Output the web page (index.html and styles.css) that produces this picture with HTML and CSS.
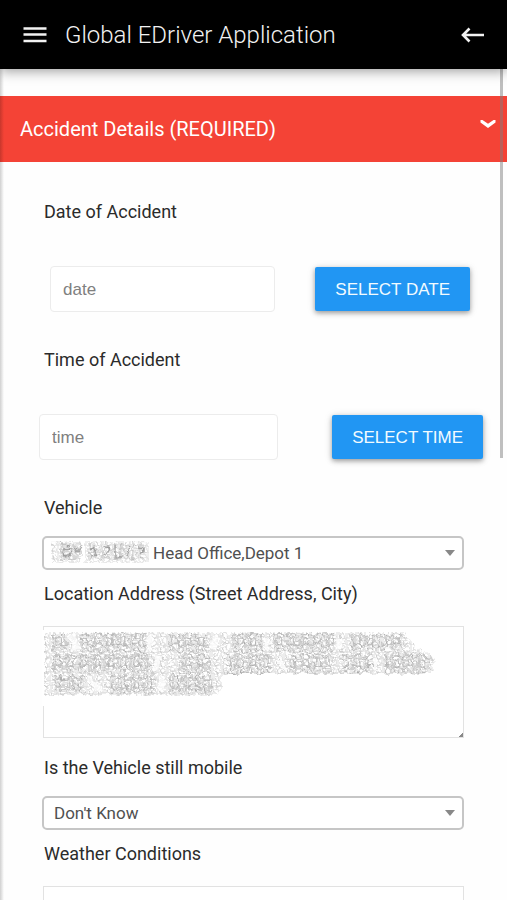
FILE: index.html
```html
<!DOCTYPE html>
<html lang="en">
<head>
<meta charset="utf-8">
<meta name="viewport" content="width=device-width, initial-scale=1">
<title>Global EDriver Application</title>
<link rel="stylesheet" href="styles.css">
</head>
<body>
<div class="app">
  <header class="topbar">
    <button class="icon-button" type="button" aria-label="Menu">
      <svg width="24" height="18" viewBox="0 0 24 18" fill="none" stroke="currentColor" stroke-width="2.6"><path d="M.5 2.500h23M.5 8.500h23M.5 15h23"/></svg>
    </button>
    <h1 class="title">Global EDriver Application</h1>
    <button class="icon-button" type="button" aria-label="Back">
      <svg width="24" height="18" viewBox="0 0 24 18" fill="none" stroke="currentColor" stroke-width="2.6"><path d="M3 9h21M9.500 2.500 3 9l6.500 6.500"/></svg>
    </button>
  </header>

  <main class="content">
    <button class="section-bar" type="button" aria-expanded="true">
      <span>Accident Details (REQUIRED)</span>
      <svg class="chevron" width="16" height="10" viewBox="0 0 16 10" fill="currentColor"><path d="M.5 1h2L8 4.700 13.500 1h2v2.400L8 9 .5 3.400z"/></svg>
    </button>

    <form class="form">
      <label class="label" for="date">Date of Accident</label>
      <div class="picker picker-date">
        <input class="input" id="date" type="text" placeholder="date">
        <button class="action" type="button">SELECT DATE</button>
      </div>

      <label class="label" for="time">Time of Accident</label>
      <div class="picker picker-time">
        <input class="input" id="time" type="text" placeholder="time">
        <button class="action" type="button">SELECT TIME</button>
      </div>

      <label class="label" for="vehicle">Vehicle</label>
      <div class="field">
        <select class="select select-vehicle" id="vehicle"><option>Head Office,Depot 1</option></select>
        <svg class="redaction redaction-vehicle" width="100" height="24" viewBox="0 0 100 24" aria-hidden="true">
          <defs>
            <pattern id="loops" width="13" height="11" patternUnits="userSpaceOnUse">
              <g fill="none" stroke="#777" stroke-width=".6">
                <ellipse cx="3" cy="4" rx="3" ry="3.500"/><ellipse cx="9" cy="6" rx="3.500" ry="3"/>
                <path d="M1 0v11M5 0l2 11M11 0v11M0 9q4-4 7 0t6 0"/>
              </g>
            </pattern>
            <pattern id="hatch" width="9" height="7" patternUnits="userSpaceOnUse">
              <g fill="none" stroke="#888" stroke-width=".6">
                <circle cx="4" cy="3" r="2.500"/><path d="M0 0l4 7M8 0v7M0 5h9"/>
              </g>
            </pattern>
            <filter id="rough" x="0" y="0" width="100%" height="100%">
              <feTurbulence type="fractalNoise" baseFrequency=".14" numOctaves="2" seed="4" result="noise"/>
              <feDisplacementMap in="SourceGraphic" in2="noise" scale="7" xChannelSelector="R" yChannelSelector="G"/>
            </filter>
          </defs>
          <g filter="url(#rough)">
            <path fill="url(#hatch)" opacity=".45" d="M1 1h30v22H1zM35 1h64v22H35z"/>
            <path fill="url(#loops)" opacity=".35" d="M10 3h18v17H10zM38 5h56v14H38z"/>
            <path fill="none" stroke="#888" stroke-width="1.300" opacity=".7" d="M20 6q-8 1-7 7t8 0-7-3M25 6l3 6 4-6M40 8q7-2 5 3 3 5-5 5M55 7q7 0 3 5t-5 4M66 6v11h7M80 7l-3 9M88 7q7 0 2 7"/>
          </g>
        </svg>
      </div>

      <label class="label label-box" for="address">Location Address (Street Address, City)</label>
      <div class="field">
        <textarea class="textarea" id="address"></textarea>
        <svg class="redaction redaction-address" width="400" height="80" viewBox="0 0 400 80" aria-hidden="true">
          <path class="cover" d="M0 4h60v76H0z"/>
          <g filter="url(#rough)">
            <g fill="url(#hatch)">
              <path opacity=".5" d="M2 6h361q6 11 16 18 12 3 15 12-3 11-15 12H180v14q-3 7-12 8H2z"/>
            </g>
            <g fill="url(#loops)">
              <path opacity=".5" d="M10 8h15v16H10zM38 7h66v19H38zM126 8h40v18h-40zM190 7h31v19h-31zM232 7h60v19h-60zM308 8h52v16h-52zM10 28h98v18H10zM137 28h32v20h-32zM184 28h45v20h-45zM248 28h40v19h-40zM300 28h30v19h-30zM342 27h46v20h-46zM12 49h31v18H12zM68 48h46v20H68zM127 49h43v18h-43z"/>
            </g>
            <path fill="none" stroke="#fff" stroke-width="5" opacity=".75" d="M29 9l6 14M108 10v14M175 9l-5 15M225 12v12M298 12v10M117 30l-5 15M236 32l8 12M333 33v10M47 52l13 15M120 50v15"/>
          </g>
        </svg>
      </div>

      <label class="label label-mobile" for="mobile">Is the Vehicle still mobile</label>
      <div class="field">
        <select class="select" id="mobile"><option>Don't Know</option><option>Yes</option><option>No</option></select>
      </div>

      <label class="label label-box" for="weather">Weather Conditions</label>
      <div class="field">
        <textarea class="textarea" id="weather"></textarea>
      </div>
    </form>
    <div class="scroll-thumb"></div>
  </main>
</div>
</body>
</html>
```
FILE: styles.css
```css
* {
  box-sizing: border-box;
}

body {
  margin: 0;
  background: #fefefe;
  color: #2b2b2b;
  font-family: Roboto, "Liberation Sans", sans-serif;
}

button,
input,
select,
textarea {
  margin: 0;
  font: inherit;
}

.app {
  display: flex;
  flex-direction: column;
  height: 100vh;
  overflow: hidden;
}

.topbar {
  position: relative;
  z-index: 1;
  display: flex;
  flex: none;
  align-items: center;
  gap: 18px;
  padding: 19px 23px 18px;
  background: #000;
  color: #f2f2f2;
  box-shadow: 0 2px 12px rgba(0, 0, 0, 0.4);
}

.title {
  flex: 1;
  margin: 0;
  font-size: 24px;
  font-weight: 300;
  line-height: 32px;
}

.icon-button {
  display: flex;
  padding: 0;
  border: 0;
  background: none;
  color: inherit;
}

.content {
  position: relative;
  flex: 1;
  min-height: 0;
  padding-top: 27px;
  overflow: hidden;
}

.content::before {
  position: absolute;
  inset: 0 auto 0 0;
  width: 4px;
  background: linear-gradient(to right, rgba(0, 0, 0, 0.18), transparent);
  content: "";
}

.section-bar {
  display: flex;
  align-items: center;
  justify-content: space-between;
  width: 100%;
  padding: 21px 11px 21px 20px;
  border: 0;
  background: #f44336;
  color: #fff;
  font-size: 20px;
  line-height: 24px;
  text-align: left;
}

.chevron {
  margin-bottom: 10px;
}

.form {
  display: flex;
  flex-direction: column;
  padding: 38px 43px 0 42px;
}

.label {
  padding-left: 2px;
  font-size: 18px;
  line-height: 24px;
}

.picker {
  display: flex;
  margin-top: 42px;
  margin-bottom: 36px;
}

.picker-date {
  gap: 40px;
  margin-right: -6px;
  margin-left: 8px;
}

.picker-time {
  gap: 54px;
  margin-right: -19px;
  margin-left: -3px;
}

.input {
  flex: 1;
  min-width: 0;
  height: 46px;
  padding: 2px 12px 0;
  border: 1px solid #ececec;
  border-radius: 4px;
  background: #fff;
  font-family: "Liberation Sans", sans-serif;
  font-size: 17px;
}

.input::placeholder {
  color: #808080;
}

.action {
  height: 44px;
  margin-top: 1px;
  padding: 2px 20px 0;
  border: 0;
  border-radius: 2px;
  background: #2196f3;
  box-shadow: 0 2px 5px rgba(0, 0, 0, 0.35), 0 1px 10px rgba(0, 0, 0, 0.1);
  color: #f2fbff;
  font-family: "Liberation Sans", sans-serif;
  font-size: 17px;
  white-space: nowrap;
}

.field {
  position: relative;
  display: flex;
  margin-top: 16px;
  margin-bottom: 12px;
}

.select {
  width: 100%;
  height: 34px;
  padding: 0 32px 0 10px;
  border: 2px solid #c6c6c6;
  border-radius: 5px;
  appearance: none;
  background: #fff;
  color: #505050;
  font-size: 17px;
}

.field:has(.select)::after {
  position: absolute;
  top: 14px;
  right: 9px;
  border: 5px solid transparent;
  border-top: 6px solid #888;
  border-bottom: 0;
  content: "";
  pointer-events: none;
}

.select-vehicle {
  padding-left: 109px;
}

.label-box + .field {
  margin-top: 20px;
  margin-bottom: 18px;
  margin-left: 1px;
}

.textarea {
  width: 100%;
  height: 112px;
  border: 1px solid #e2e2e2;
  border-radius: 0;
  background: #fff;
  resize: vertical;
}

.textarea::-webkit-resizer {
  background: linear-gradient(135deg, transparent 84%, #888 84%);
}

.redaction {
  position: absolute;
  pointer-events: none;
}

.redaction-vehicle {
  top: 4px;
  left: 8px;
}

.redaction-address {
  top: 0;
  left: -1px;
}

.cover {
  fill: #fff;
}

.scroll-thumb {
  position: absolute;
  top: 0;
  right: 4px;
  width: 3px;
  height: 389px;
  background: rgba(128, 128, 128, 0.5);
}
```
